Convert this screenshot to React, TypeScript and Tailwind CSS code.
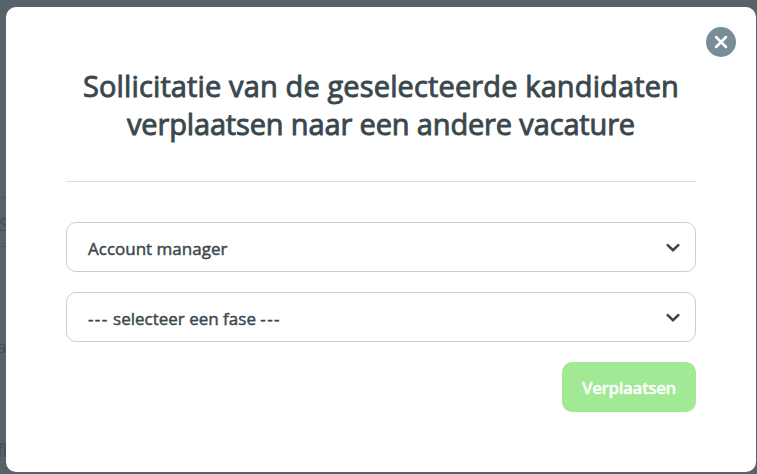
import { useState } from "react";
import type { ReactNode } from "react";

function SelectBox({ children }: { children: ReactNode }) {
  return (
    <button
      type="button"
      className="flex h-[50px] w-full items-center justify-between rounded-[10px] border border-[#c3d0d8] bg-white pr-[15px] pl-[21px] text-left"
    >
      <span className="pt-[3px] text-[17px] leading-6 whitespace-nowrap text-[#3a484d] [-webkit-text-stroke:0.45px_#3a484d]">
        {children}
      </span>
      <svg width="14" height="10" viewBox="0 0 14 10" fill="none" className="mt-px">
        <path d="M1.7 2.1 7 7.3l5.3-5.2" stroke="#3a484d" strokeWidth="2.6" strokeLinecap="round" />
      </svg>
    </button>
  );
}

export default function App() {
  const [open, setOpen] = useState(true);

  return (
    <main className="grid h-[474px] w-[757px] overflow-hidden bg-[#566368] font-['Open_Sans','Noto_Sans',sans-serif]">
      {/* Page behind the overlay */}
      <div aria-hidden="true" className="col-start-1 row-start-1 flex flex-col pt-[197px] text-[#435055]">
        <p className="-ml-px h-[50px] border-y border-[#4b575c] pt-[14px] text-[18px] leading-6">S</p>
        <p className="-ml-[3px] pt-[88px] text-[17px] leading-6">a</p>
        <p className="-ml-[3px] pt-[79px] text-[19px] leading-6 tracking-[-1px]">fi</p>
      </div>

      {open && (
        <section className="relative col-start-1 row-start-1 mt-[7px] ml-[6px] h-[465px] w-[750px] rounded-[10px] bg-white px-[60px] pt-[60px]">
          <button
            type="button"
            aria-label="Sluiten"
            onClick={() => setOpen(false)}
            className="absolute top-5 right-5 flex size-[30px] items-center justify-center rounded-full bg-[#788d97]"
          >
            <svg width="14" height="14" viewBox="0 0 14 14" fill="none">
              <path d="m2 2 10 10M12 2 2 12" stroke="#fff" strokeWidth="2.5" strokeLinecap="round" />
            </svg>
          </button>

          {/* Title */}
          <h1 className="h-[115px] border-b border-[#d9e1e4] text-center text-[29px] leading-[37px] whitespace-nowrap text-[#3a484d] [-webkit-text-stroke:0.9px_#3a484d]">
            <span className="block tracking-[0.13px]">Sollicitatie van de geselecteerde kandidaten</span>
            <span className="block pt-px tracking-[-0.15px]">verplaatsen naar een andere vacature</span>
          </h1>

          {/* Form */}
          <form className="flex flex-col gap-5 pt-10" onSubmit={(e) => e.preventDefault()}>
            <SelectBox>Account manager</SelectBox>
            <SelectBox>
              <span className="tracking-[1.4px]">---</span> selecteer een fase <span className="tracking-[1.4px]">---</span>
            </SelectBox>
            <button
              type="submit"
              className="h-[50px] w-[134px] self-end rounded-[10px] bg-[#a2e996] pt-px text-[17px] leading-6 font-semibold tracking-[-0.4px] whitespace-nowrap text-white [-webkit-text-stroke:0.3px_#fff]"
            >
              Verplaatsen
            </button>
          </form>
        </section>
      )}
    </main>
  );
}
